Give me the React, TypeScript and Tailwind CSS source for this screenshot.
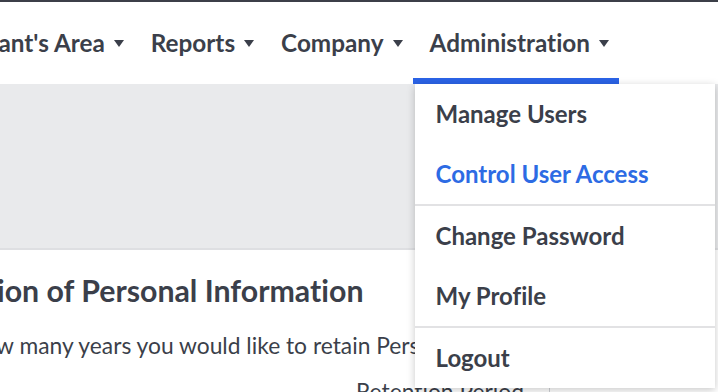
import React from "react";

const navItems = [
  { label: "Accountant's Area", active: false },
  { label: "Reports", active: false },
  { label: "Company", active: false },
  { label: "Administration", active: true },
];

const menuGroups = [
  [
    { label: "Manage Users", active: false },
    { label: "Control User Access", active: true },
  ],
  [
    { label: "Change Password", active: false },
    { label: "My Profile", active: false },
  ],
  [{ label: "Logout", active: false }],
];

function Caret() {
  return (
    <svg width="10" height="7" viewBox="0 0 10 7" className="ml-[9px] mt-[1px]">
      <path d="M0 0 L10 0 L5 7 Z" fill="#3b3f4a" />
    </svg>
  );
}

function Dropdown() {
  return (
    <div className="absolute left-[2px] top-[calc(100%+6px)] w-[300px] bg-white shadow-[0_2px_8px_rgba(0,0,0,0.22)] z-10">
      {menuGroups.map((group, gi) => (
        <div key={gi} className={gi > 0 ? "border-t-2 border-[#e2e2e4]" : ""}>
          {group.map((item) => (
            <div
              key={item.label}
              className={`h-[60px] flex items-center pl-[21px] text-[24px] font-bold whitespace-nowrap ${
                item.active ? "text-[#2d6be4]" : "text-[#3b3f4a]"
              }`}
            >
              {item.label}
            </div>
          ))}
        </div>
      ))}
    </div>
  );
}

export default function App() {
  return (
    <div
      className="relative w-[718px] h-[392px] overflow-hidden bg-white text-[#3b3f4a] [font-variant-ligatures:none]"
      style={{ fontFamily: "Lato, 'Open Sans', sans-serif" }}
    >
      <div className="h-[2px] bg-[#3c3f48]" />

      {/* top nav */}
      <nav className="h-[82px] flex justify-end pr-[99px] whitespace-nowrap">
        {navItems.map((item) => (
          <div
            key={item.label}
            className={`relative flex items-center pl-[17px] pr-[10px] text-[24.3px] font-bold shrink-0 ${
              item.active ? "border-b-[6px] border-[#2b63e6] pt-[6px]" : ""
            }`}
          >
            <span>{item.label}</span>
            <Caret />
            {item.active && <Dropdown />}
          </div>
        ))}
      </nav>

      {/* gray band */}
      <div className="h-[166px] bg-[#e9eaec] border-b-2 border-[#dedfe2]" />

      {/* content */}
      <div className="ml-[-93px] pt-[20px]">
        <h2 className="text-[30.3px] font-bold leading-[40px] whitespace-nowrap">
          Retention of Personal Information
        </h2>
        <p className="mt-[20px] ml-[-3px] text-[22.8px] leading-[30px] whitespace-nowrap">
          Select how many years you would like to retain Personal Information.
        </p>
        <div className="mt-[16px] flex items-start">
          <div className="w-[642px] flex justify-end pr-[25px] text-[22.8px] leading-[30px]">
            Retention Period
          </div>
          <div className="flex-1 mt-[6px] border-l border-[#cfd1d5] h-[30px]" />
        </div>
      </div>
    </div>
  );
}
